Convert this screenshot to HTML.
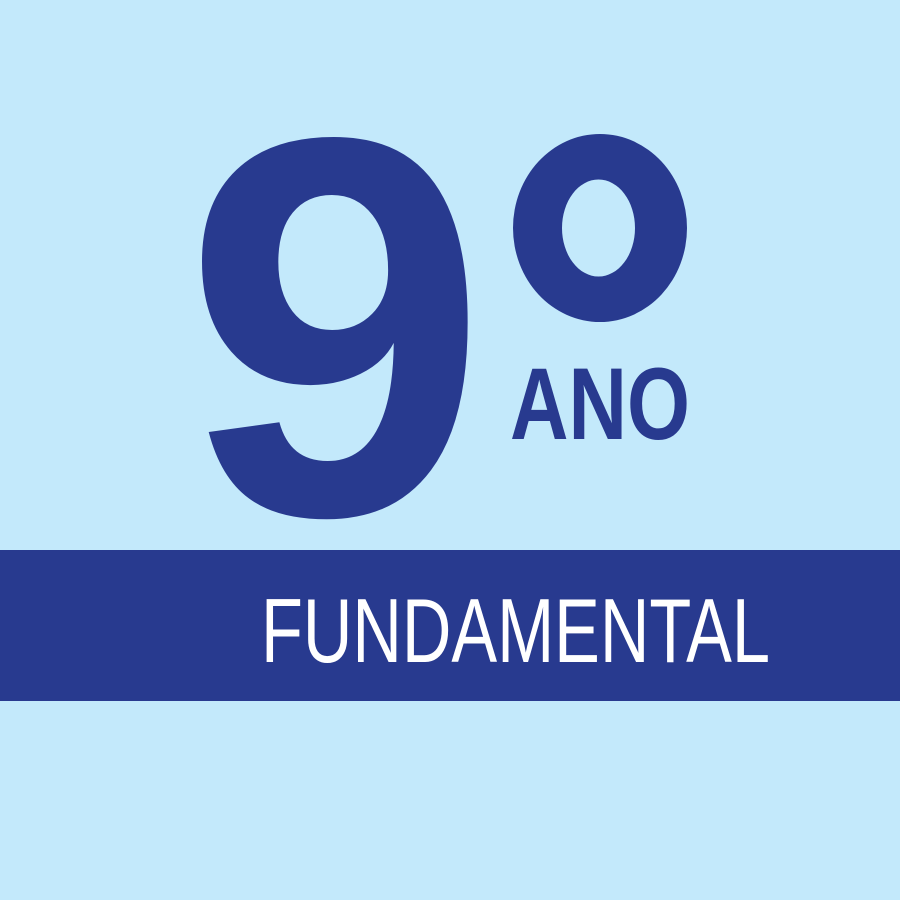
<!DOCTYPE html>
<html><head><style>
html,body{margin:0;padding:0;background:#c3e9fb;}
svg{display:block}
</style></head><body>
<svg width="900" height="900" viewBox="0 0 900 900" xmlns="http://www.w3.org/2000/svg">
<rect width="900" height="900" fill="#c3e9fb"/>
<text x="183" y="514" font-family="Liberation Sans, sans-serif" font-weight="bold" font-size="540" fill="#283a8f" textLength="305" lengthAdjust="spacingAndGlyphs">9</text>
<path fill="#283a8f" fill-rule="evenodd" d="M513,228 a87,94 0 1,0 174,0 a87,94 0 1,0 -174,0 Z M562,228 a36.5,48.5 0 1,0 73,0 a36.5,48.5 0 1,0 -73,0 Z"/>
<text x="510" y="439" font-family="Liberation Sans, sans-serif" font-weight="bold" font-size="102" fill="#283a8f" textLength="180" lengthAdjust="spacingAndGlyphs">ANO</text>
<rect x="0" y="550" width="900" height="151" fill="#283a8f"/>
<text x="261" y="662" font-family="Liberation Sans, sans-serif" font-size="91" fill="#ffffff" textLength="509" lengthAdjust="spacingAndGlyphs">FUNDAMENTAL</text>
</svg>
</body></html>
